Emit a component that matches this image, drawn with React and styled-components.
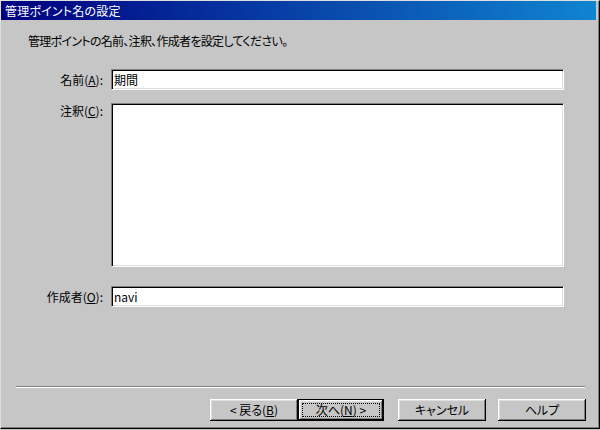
import React from 'react'
import styled, { createGlobalStyle } from 'styled-components'

const GlobalStyle = createGlobalStyle`
  html, body {
    margin: 0;
    padding: 0;
    background: #c6c6c6;
  }
  body {
    font-family: "Noto Sans CJK JP", "Liberation Sans", sans-serif;
    font-size: 12px;
    font-feature-settings: "palt";
    color: #000;
  }
`

const Frame = styled.div`
  width: 600px;
  height: 429px;
  box-sizing: border-box;
  display: flex;
  flex-direction: column;
  padding-right: 3px;
  background: #c6c6c6;
  border-top: 1px solid #dfdfdf;
  border-left: 1px solid #dfdfdf;
  border-right: 1px solid #000;
  border-bottom: 1px solid #000;
  box-shadow: inset -1px -1px #808080;
`

const TitleBar = styled.div`
  height: 19px;
  display: flex;
  align-items: center;
  padding-left: 4px;
  background: linear-gradient(to right, #000080, #1084d0);
  color: #fff;
  font-size: 12px;
  line-height: 19px;
  letter-spacing: 0.2px;
`

const Body = styled.div`
  flex: 1;
  display: flex;
  flex-direction: column;
  padding-top: 14px;
`

const Intro = styled.p`
  margin: 0 0 0 27px;
  line-height: 14px;
  letter-spacing: -0.7px;
`

const Form = styled.div`
  margin-top: 21px;
  display: grid;
  grid-template-columns: 102px 453px;
  column-gap: 8px;
  align-items: center;
`

const Label = styled.label`
  justify-self: end;
  align-self: ${p => (p.$top ? 'start' : 'center')};
  padding-top: ${p => (p.$top ? '1px' : '0')};
  line-height: 14px;
  white-space: nowrap;
  u {
    text-decoration-thickness: 1px;
    text-underline-offset: 1px;
  }
`

const sunken = `
  box-sizing: border-box;
  background: #fff;
  border-top: 1px solid #808080;
  border-left: 1px solid #808080;
  border-right: 1px solid #fff;
  border-bottom: 1px solid #fff;
  box-shadow: inset 1px 1px #000, inset -1px -1px #dfdfdf;
  font-family: "Noto Sans CJK JP", "Liberation Sans", sans-serif;
  font-size: 12px;
  font-feature-settings: "palt";
  color: #000;
  outline: none;
  margin: 0;
`

const TextBox = styled.input`
  ${sunken}
  width: 453px;
  height: 21px;
  padding: 0 2px;
  line-height: 17px;
`

const TextArea = styled.textarea`
  ${sunken}
  width: 453px;
  height: 164px;
  padding: 2px;
  resize: none;
`

const Gap = styled.div`
  grid-column: 1 / 3;
  height: ${p => p.$h}px;
`

const Footer = styled.div`
  padding-bottom: 7px;
`

const Separator = styled.div`
  margin: 0 11px 0 15px;
  border-top: 1px solid #808080;
  border-bottom: 1px solid #fff;
`

const Buttons = styled.div`
  margin-top: 11px;
  padding-right: 10px;
  display: flex;
  justify-content: flex-end;
`

const Button = styled.button`
  position: relative;
  box-sizing: border-box;
  width: ${p => p.$w || 88}px;
  height: 22px;
  margin-left: ${p => p.$ml || 0}px;
  padding: 0;
  background: #c6c6c6;
  border: ${p => (p.$default ? '1px solid #000' : 'none')};
  box-shadow: inset -1px -1px #000, inset 1px 1px #fff,
    inset -2px -2px #808080, inset 2px 2px #dfdfdf;
  font-family: "Noto Sans CJK JP", "Liberation Sans", sans-serif;
  font-size: 12px;
  font-feature-settings: "palt";
  line-height: 14px;
  color: #000;
  display: flex;
  align-items: center;
  justify-content: center;
  u {
    text-decoration-thickness: 1px;
    text-underline-offset: 1px;
  }
`

const Focus = styled.span`
  position: absolute;
  left: 3px;
  right: 3px;
  top: 3px;
  bottom: 3px;
  border: 1px dotted #000;
  pointer-events: none;
`

export default function App() {
  return (
    <>
      <GlobalStyle />
      <Frame>
        <TitleBar>管理ポイント名の設定</TitleBar>
        <Body>
          <Intro>管理ポイントの名前、注釈、作成者を設定してください。</Intro>
          <Form>
            <Label>名前(<u>A</u>):</Label>
            <TextBox readOnly defaultValue="期間" />
            <Gap $h={13} />
            <Label $top>注釈(<u>C</u>):</Label>
            <TextArea readOnly defaultValue="" />
            <Gap $h={19} />
            <Label>作成者(<u>O</u>):</Label>
            <TextBox readOnly defaultValue="navi" />
          </Form>
        </Body>
        <Footer>
          <Separator />
          <Buttons>
            <Button>&lt; 戻る(<u>B</u>)</Button>
            <Button $default $w={86} $ml={0}>
              <Focus />
              次へ(<u>N</u>) &gt;
            </Button>
            <Button $ml={14}>キャンセル</Button>
            <Button $ml={12}>ヘルプ</Button>
          </Buttons>
        </Footer>
      </Frame>
    </>
  )
}
